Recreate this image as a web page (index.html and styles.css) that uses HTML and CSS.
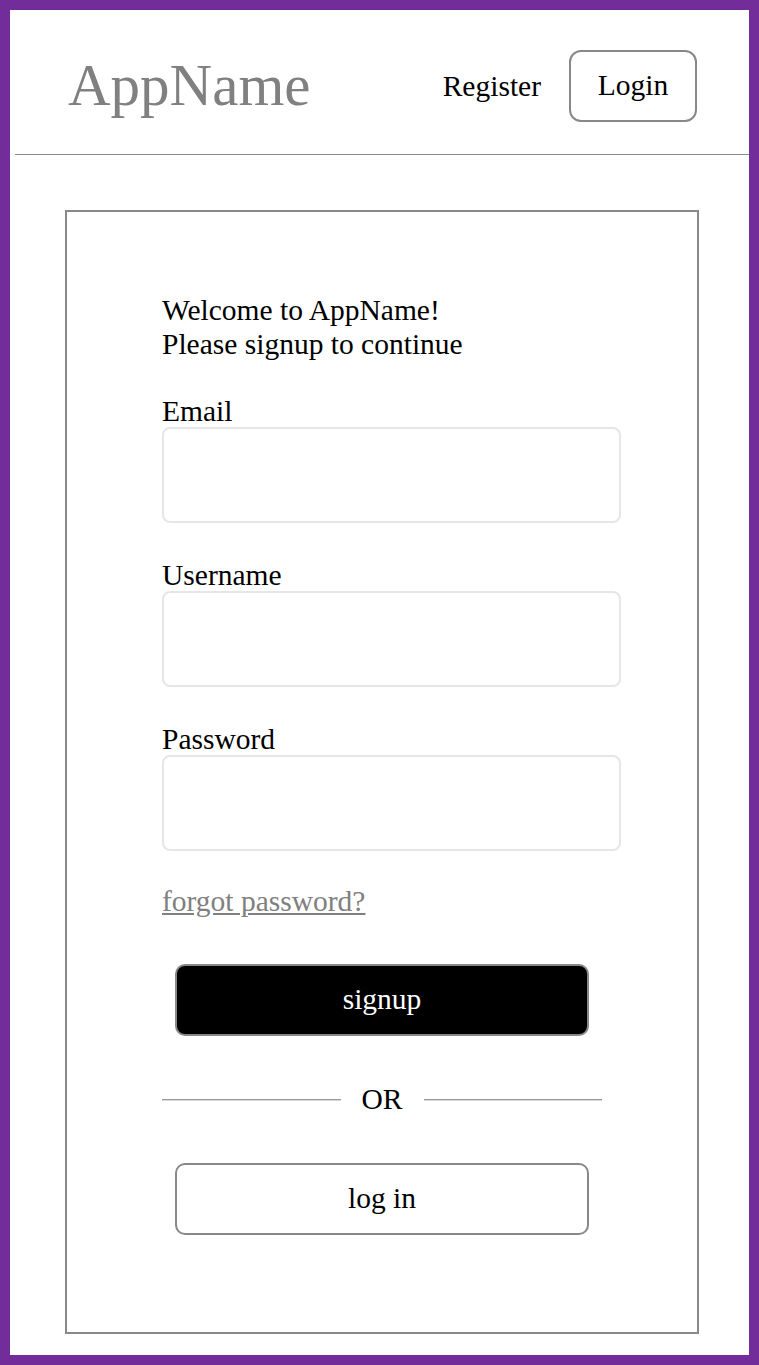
FILE: index.html
```html
<!DOCTYPE html>
<html lang="en">
<head>
<meta charset="utf-8">
<title>AppName - Signup</title>
<link rel="stylesheet" href="styles.css">
</head>
<body>
<header class="topbar">
  <div class="brand">AppName</div>
  <nav class="nav">
    <a class="nav-link" href="#">Register</a>
    <a class="nav-btn" href="#">Login</a>
  </nav>
</header>
<main class="card">
  <p class="welcome">Welcome to AppName!<br>Please signup to continue</p>
  <div class="field">
    <label class="label" for="email">Email</label>
    <input class="input" id="email" type="email">
  </div>
  <div class="field">
    <label class="label" for="username">Username</label>
    <input class="input" id="username" type="text">
  </div>
  <div class="field field-last">
    <label class="label" for="password">Password</label>
    <input class="input" id="password" type="password">
  </div>
  <a class="forgot" href="#">forgot password?</a>
  <button class="btn btn-primary" type="button">signup</button>
  <div class="divider">
    <span class="divider-line"></span>
    <span class="divider-text">OR</span>
    <span class="divider-line"></span>
  </div>
  <button class="btn btn-secondary" type="button">log in</button>
</main>
</body>
</html>
```
FILE: styles.css
```css
html {
  background: #732d9a;
  margin: 0;
  padding: 0;
}

body {
  margin: 10px;
  min-height: 1345px;
  background: #ffffff;
  font-family: "Liberation Serif", "Times New Roman", serif;
  font-size: 29.5px;
  line-height: 34px;
  color: #000;
  box-sizing: border-box;
  padding-top: 1px;
}

.topbar {
  display: flex;
  align-items: center;
  justify-content: space-between;
  height: 143px;
  margin-left: 5px;
  padding: 0 52px 0 53px;
  border-bottom: 1.5px solid #8c8c8c;
}

.brand {
  font-size: 59px;
  line-height: 68px;
  color: #808080;
  padding-top: 4px;
}

.nav {
  display: flex;
  align-items: center;
  gap: 28px;
  margin-top: 7px;
}

.nav-link {
  color: #000;
  text-decoration: none;
  padding-top: 0;
}

.nav-btn {
  display: block;
  width: 128px;
  height: 72px;
  box-sizing: border-box;
  border: 2px solid #888;
  border-radius: 12px;
  color: #000;
  text-decoration: none;
  text-align: center;
  line-height: 66px;
}

.card {
  display: flex;
  flex-direction: column;
  align-items: flex-start;
  width: 634px;
  box-sizing: border-box;
  margin: 55px 0 0 55px;
  padding: 81px 95px 97px 95px;
  border: 2px solid #888;
}

.welcome {
  margin: 0 0 33px;
}

.field {
  display: flex;
  flex-direction: column;
  margin-bottom: 35px;
}

.field-last {
  margin-bottom: 33px;
}

.label {
  display: block;
  height: 33px;
}

.input {
  width: 459px;
  height: 96px;
  box-sizing: border-box;
  margin: 0;
  border: 2px solid #e6e6e6;
  border-radius: 8px;
  background: #fff;
  font: inherit;
}

.forgot {
  color: #808080;
  text-decoration: underline;
  margin-bottom: 46px;
}

.btn {
  display: block;
  width: 414px;
  height: 72px;
  margin: 0 13px;
  box-sizing: border-box;
  border: 2px solid #888;
  border-radius: 10px;
  font-family: inherit;
  font-size: 29.5px;
  line-height: 34px;
  padding: 0 0 2px;
  cursor: pointer;
}

.btn-primary {
  background: #000;
  color: #fff;
}

.btn-secondary {
  background: #fff;
  color: #000;
}

.divider {
  display: flex;
  align-items: center;
  width: 440px;
  margin: 46px 0 47px;
  height: 34px;
}

.divider-line {
  flex: 1;
  height: 0;
  border-top: 1px solid #9a9a9a;
  border-bottom: 1px solid #d6d6d6;
  margin-top: 2px;
}

.divider-text {
  padding: 0 21px;
}
```
